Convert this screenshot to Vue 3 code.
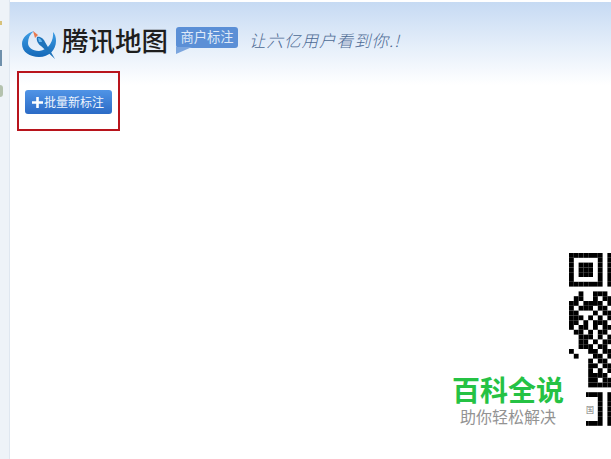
<script setup>
const cell = 4.8
const rows = [
  '111111101',
  '100000101',
  '101110101',
  '101110101',
  '101110101',
  '100000101',
  '111111101',
  '000000000',
  '001001110',
  '011001011',
  '110111101',
  '101110110',
  '110001011',
  '111010101',
  '110101110',
  '101101011',
  '011010110',
  '001110101',
  '001101011',
  '001110110',
  '100011011',
  '010001101',
  '000010110',
  '000011011',
  '000010101',
  '000011110',
  '000011011',
  '000011111',
  '000000000',
  '111111101',
  '100000101',
  '100000101',
  '100000101',
  '100000101',
  '100000101',
  '111111101'
]

const modules = []
rows.forEach((row, y) => {
  row.split('').forEach((v, x) => {
    if (v === '1') modules.push({ x: x * cell, y: y * cell })
  })
})
</script>

<template>
  <div class="page">
    <aside class="rail">
      <span class="rail-mark yellow"></span>
      <span class="rail-mark blue"></span>
      <span class="rail-mark green"></span>
    </aside>

    <main class="main">
      <header class="header">
        <svg class="logo" width="36" height="32" viewBox="0 0 36 32">
          <defs>
            <linearGradient id="ring" x1="0" y1="0" x2="0" y2="1">
              <stop offset="0" stop-color="#3f9fe6" />
              <stop offset="1" stop-color="#1468b8" />
            </linearGradient>
          </defs>
          <path fill="url(#ring)" d="M12 3C5 5 0 10 0 16C0 24 8 29 17 29C27 29 34 22 34 13C34 9 33 6 31 4C32 12 27 22 17 23C10 23 6 19 6 15C6 10 8 6 12 3Z" />
          <path fill="#e8794e" d="M11 3L16 7L13 10Z" />
          <path fill="#1f74bb" d="M15 9C18 8 22 11 23 14L33 31L19 18C16 16 14 12 15 9Z" />
          <path fill="#6ab7ee" d="M16 10C18 10 20 12 20 14L17 14Z" />
        </svg>
        <h1 class="title">腾讯地图</h1>
        <div class="bubble">商户标注</div>
        <p class="slogan">让六亿用户看到你.!</p>
      </header>

      <div class="toolbar">
        <button class="add-btn">
          <svg width="11" height="11" viewBox="0 0 11 11">
            <path fill="#fff" d="M4.2 0H6.8V4.2H11V6.8H6.8V11H4.2V6.8H0V4.2H4.2Z" />
          </svg>
          <span>批量新标注</span>
        </button>
      </div>
    </main>

    <div class="highlight"></div>

    <svg class="qr" width="42" height="173" viewBox="0 0 42 173">
      <rect v-for="(m, i) in modules" :key="i" :x="m.x" :y="m.y" :width="cell" :height="cell" fill="#000" />
    </svg>

    <div class="watermark">
      <div class="wm-title">百科全说</div>
      <div class="wm-sub">助你轻松解决</div>
      <span class="wm-glyph">国</span>
    </div>
  </div>
</template>

<style>
html,
body {
  margin: 0;
  background: #fff;
}
</style>

<style scoped>
.page {
  position: relative;
  display: flex;
  width: 611px;
  height: 459px;
  overflow: hidden;
  background: #fff;
  font-family: "Noto Sans CJK SC", "Liberation Sans", sans-serif;
}

.rail {
  display: flex;
  flex-direction: column;
  align-items: flex-start;
  flex: none;
  width: 10px;
  padding-top: 21px;
  box-sizing: border-box;
  background: #eef3f8;
  border-right: 1px solid #dfe7f0;
}

.rail-mark {
  display: block;
  width: 2px;
}

.rail-mark.yellow {
  height: 4px;
  background: #d8c27a;
}

.rail-mark.blue {
  height: 16px;
  margin-top: 25px;
  background: #6f90ab;
}

.rail-mark.green {
  width: 3px;
  height: 12px;
  margin-top: 19px;
  border-radius: 0 6px 6px 0;
  background: #b4c2ae;
}

.main {
  flex: 1;
  min-width: 0;
  padding-top: 2px;
}

.header {
  display: flex;
  align-items: flex-start;
  box-sizing: border-box;
  height: 83px;
  padding: 25px 0 0 12px;
  background: linear-gradient(#c6daf3, #e6effa 55%, #fff);
}

.logo {
  flex: none;
  margin-top: 1px;
}

.title {
  margin: -3px 0 0 4px;
  font-size: 26.5px;
  line-height: 32px;
  font-weight: 500;
  color: #1e1e1e;
  white-space: nowrap;
}

.bubble {
  position: relative;
  flex: none;
  width: 62px;
  height: 21px;
  margin: 0 0 0 8px;
  border-radius: 3px;
  background: #5b8fd6;
  color: #dfe9f8;
  font-size: 13.3px;
  line-height: 20px;
  text-align: center;
}

.bubble::after {
  content: "";
  position: absolute;
  left: 0;
  top: 20px;
  border-style: solid;
  border-width: 7px 16px 0 0;
  border-color: #7ba5de transparent transparent transparent;
}

.slogan {
  margin: 1px 0 0 11px;
  font-size: 16.5px;
  line-height: 24px;
  font-weight: 300;
  font-style: italic;
  letter-spacing: 1px;
  color: #4d6a94;
  white-space: nowrap;
}

.toolbar {
  padding: 5px 0 0 15px;
}

.add-btn {
  display: flex;
  align-items: center;
  gap: 1px;
  width: 87px;
  height: 24px;
  padding: 0 0 0 7px;
  border: none;
  border-radius: 3px;
  background: linear-gradient(#5094e6, #2b6bc6);
  color: #eef4fc;
  font-family: inherit;
  font-size: 12px;
  line-height: 24px;
}

.highlight {
  position: absolute;
  left: 17px;
  top: 71px;
  width: 103px;
  height: 60px;
  box-sizing: border-box;
  border: 2px solid #b8141c;
  pointer-events: none;
}

.qr {
  position: absolute;
  left: 569px;
  top: 253px;
  filter: blur(0.3px);
}

.watermark {
  position: absolute;
  left: 440px;
  top: 373px;
  width: 146px;
  height: 62px;
  background: #fff;
}

.wm-title {
  margin: 0 0 0 12px;
  font-size: 28px;
  line-height: 32px;
  font-weight: 700;
  color: #25c244;
  white-space: nowrap;
}

.wm-sub {
  margin: 1px 0 0 20px;
  font-size: 16px;
  line-height: 20px;
  color: #939393;
  white-space: nowrap;
}

.wm-glyph {
  position: absolute;
  left: 146px;
  top: 31px;
  font-size: 8px;
  line-height: 12px;
  color: #777;
}
</style>
